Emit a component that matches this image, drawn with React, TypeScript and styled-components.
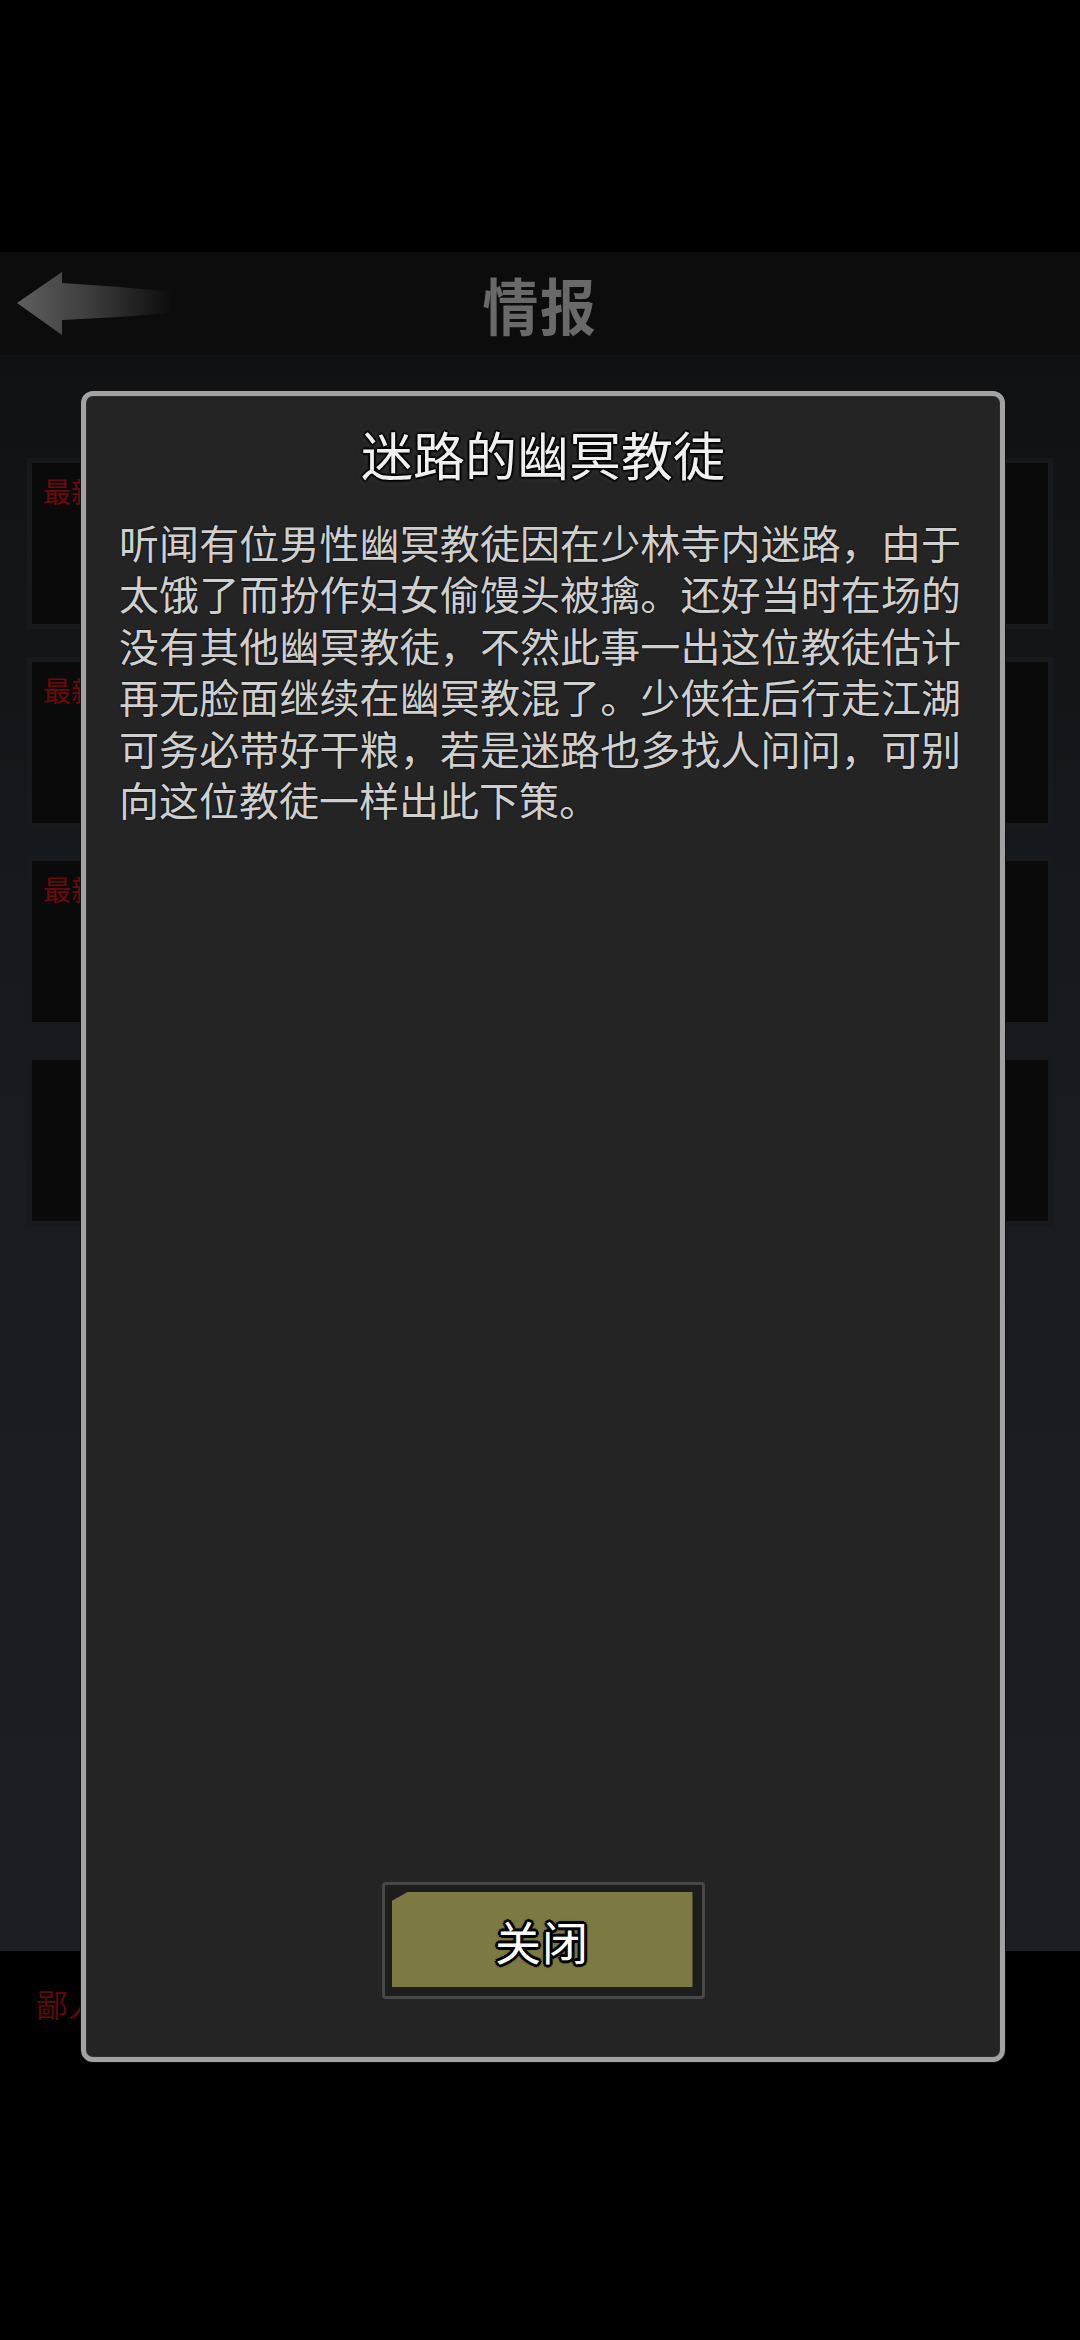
import React from 'react';
import styled, { createGlobalStyle } from 'styled-components';

const GlobalStyle = createGlobalStyle`
  html, body {
    margin: 0;
    padding: 0;
    background: #000;
  }
  body {
    font-family: 'Noto Sans CJK SC', 'Noto Sans', sans-serif;
  }
`;

const Screen = styled.div`
  position: relative;
  width: 1080px;
  height: 2340px;
  background: #000;
  overflow: hidden;
  display: flex;
  flex-direction: column;
`;

const StatusGap = styled.div`
  height: 252px;
  flex: none;
`;

const Header = styled.header`
  height: 103px;
  flex: none;
  background: #0c0c0c;
  display: grid;
  grid-template-columns: 1fr auto 1fr;
  align-items: center;
`;

const BackBtn = styled.div`
  padding-left: 17px;
  display: flex;
  align-items: center;
`;

const HeaderTitle = styled.h1`
  margin: 0;
  font-size: 62px;
  line-height: 1;
  font-weight: 700;
  color: #696969;
  letter-spacing: 2px;
  transform: scaleX(0.9);
`;

const Content = styled.main`
  height: 1596px;
  flex: none;
  box-sizing: border-box;
  padding: 103px 27px 0;
  background: linear-gradient(180deg, #0f1113 0%, #15181c 30%, #1a1e23 70%, #1b1f24 100%);
  display: flex;
  flex-direction: column;
  gap: 28px;
`;

const Card = styled.div`
  height: 171px;
  box-sizing: border-box;
  border: 5px solid #17191c;
  background: #0a0a0a;
  padding: 12px 11px;
`;

const CardTag = styled.span`
  font-size: 28px;
  line-height: 1.2;
  color: #6d0909;
`;

const Footer = styled.footer`
  flex: 1;
  background: #000;
  padding: 33px 36px 0;
`;

const FooterNote = styled.span`
  font-size: 32px;
  line-height: 1.2;
  color: #5c0909;
`;

// info popup, sits over the list
const Dialog = styled.section`
  position: absolute;
  top: 391px;
  left: 81px;
  width: 924px;
  height: 1671px;
  box-sizing: border-box;
  border: 5px solid #a2a2a2;
  border-radius: 12px;
  background: #242424;
  box-shadow: 0 0 0 1px #111, inset 0 0 0 1px #2e2e2e;
  display: flex;
  flex-direction: column;
`;

const DialogTitle = styled.h2`
  margin: 28px 0 0;
  text-align: center;
  font-size: 52px;
  line-height: 60px;
  font-weight: 400;
  color: #f0f0f0;
  text-shadow:
    0 0 2px #000,
    2px 0 2px #000,
    -2px 0 2px #000,
    0 2px 2px #000,
    0 -2px 2px #000,
    0 0 6px #555;
`;

const DialogBody = styled.p`
  margin: 33px 0 0 33px;
  width: 842px;
  font-size: 40px;
  line-height: 51.4px;
  font-weight: 400;
  color: #cfcfcf;
  text-align: justify;
  text-shadow: 0 0 2px #000;
`;

const ButtonFrame = styled.div`
  margin: auto auto 58px;
  width: 323px;
  height: 117px;
  box-sizing: border-box;
  border: 3px solid #484848;
  border-radius: 4px;
  background: #1d1d1d;
  padding: 7px 9px 9px 7px;
  display: flex;
`;

const CloseButton = styled.button`
  flex: 1;
  border: none;
  padding: 0;
  background: #7b7a42;
  clip-path: polygon(16px 0, 100% 0, 100% 100%, 0 100%, 0 9px);
  font-family: inherit;
  font-size: 46px;
  font-weight: 400;
  color: #fff;
  letter-spacing: 1px;
  text-shadow:
    3px 0 0 #000,
    -3px 0 0 #000,
    0 3px 0 #000,
    0 -3px 0 #000,
    2px 2px 0 #000,
    -2px 2px 0 #000,
    2px -2px 0 #000,
    -2px -2px 0 #000,
    0 0 4px #000;
  cursor: pointer;
`;

const BackArrow = () => (
  <svg width="155" height="63" viewBox="0 0 155 63">
    <defs>
      <linearGradient id="arrowFade" x1="0" y1="0" x2="1" y2="0">
        <stop offset="0" stopColor="#5e5e5e" />
        <stop offset="0.45" stopColor="#3e3e3e" />
        <stop offset="1" stopColor="#0c0c0c" />
      </linearGradient>
    </defs>
    <path d="M0 31 L45 0 L45 11 Q100 14 155 20 L155 41 Q100 46 45 48 L45 63 Z" fill="url(#arrowFade)" />
  </svg>
);

const story =
  '听闻有位男性幽冥教徒因在少林寺内迷路，由于太饿了而扮作妇女偷馒头被擒。还好当时在场的没有其他幽冥教徒，不然此事一出这位教徒估计再无脸面继续在幽冥教混了。少侠往后行走江湖可务必带好干粮，若是迷路也多找人问问，可别向这位教徒一样出此下策。';

const cards = ['最新情报', '最新情报', '最新情报', ''];

export default function App() {
  return (
    <Screen>
      <GlobalStyle />
      <StatusGap />
      <Header>
        <BackBtn>
          <BackArrow />
        </BackBtn>
        <HeaderTitle>情报</HeaderTitle>
        <div />
      </Header>
      <Content>
        {cards.map((tag, i) => (
          <Card key={i}>{tag && <CardTag>{tag}</CardTag>}</Card>
        ))}
      </Content>
      <Footer>
        <FooterNote>鄙人消息灵通</FooterNote>
      </Footer>

      <Dialog>
        <DialogTitle>迷路的幽冥教徒</DialogTitle>
        <DialogBody>{story}</DialogBody>
        <ButtonFrame>
          <CloseButton>关闭</CloseButton>
        </ButtonFrame>
      </Dialog>
    </Screen>
  );
}
